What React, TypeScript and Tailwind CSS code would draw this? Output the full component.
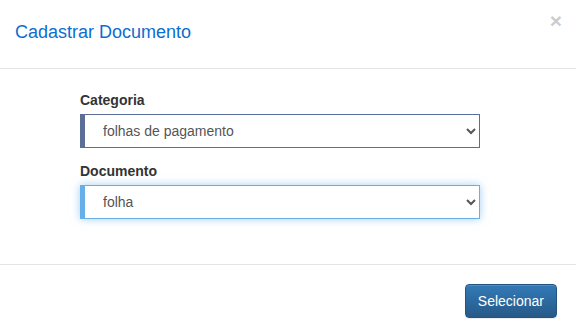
import { useState } from "react"

function App() {
  const [categoria, setCategoria] = useState("folhas")
  const [documento, setDocumento] = useState("folha")

  return (
    <div className="w-[576px] h-[335px] bg-white flex flex-col" style={{ fontFamily: '"Liberation Sans", Arial, sans-serif' }}>
      {/* header */}
      <div className="h-[69px] border-b border-[#e5e5e5] flex items-start justify-between pl-[15px] pr-[14px]">
        <h4 className="text-[18px] leading-[20px] text-[#0b6ed0] mt-[22px]">Cadastrar Documento</h4>
        <button className="text-[21px] leading-none font-bold text-black opacity-20 mt-[10px]">×</button>
      </div>

      {/* body */}
      <div className="flex-1 pl-[80px] pt-[21px]">
        <label className="block w-[400px] text-[14px] leading-[20px] font-bold text-[#333] mb-[4px]">Categoria</label>
        <select
          value={categoria}
          onChange={(e) => setCategoria(e.target.value)}
          className="block w-[400px] h-[34px] border border-[#5b6e95] border-l-[5px] bg-white pl-[14px] pr-[8px] text-[14px] text-[#555] outline-none"
        >
          <option value="folhas">folhas de pagamento</option>
          <option value="contratos">contratos</option>
        </select>

        <label className="block w-[400px] text-[14px] leading-[20px] font-bold text-[#333] mt-[13px] mb-[4px]">Documento</label>
        <select
          value={documento}
          onChange={(e) => setDocumento(e.target.value)}
          className="block w-[400px] h-[34px] border border-[#66afe9] border-l-[5px] bg-white pl-[14px] pr-[8px] text-[14px] text-[#555] outline-none shadow-[0_0_8px_rgba(102,175,233,0.6)]"
        >
          <option value="folha">folha</option>
          <option value="holerite">holerite</option>
        </select>
      </div>

      {/* footer */}
      <div className="h-[71px] border-t border-[#e5e5e5] flex items-start justify-end pr-[19px] pt-[19px]">
        <button className="h-[34px] px-[12px] rounded-[4px] border border-[#245580] bg-gradient-to-b from-[#337ab7] to-[#265a88] text-white text-[14px] shadow-[inset_0_1px_0_rgba(255,255,255,0.15),0_1px_1px_rgba(0,0,0,0.075)]">
          Selecionar
        </button>
      </div>
    </div>
  )
}

export default App
